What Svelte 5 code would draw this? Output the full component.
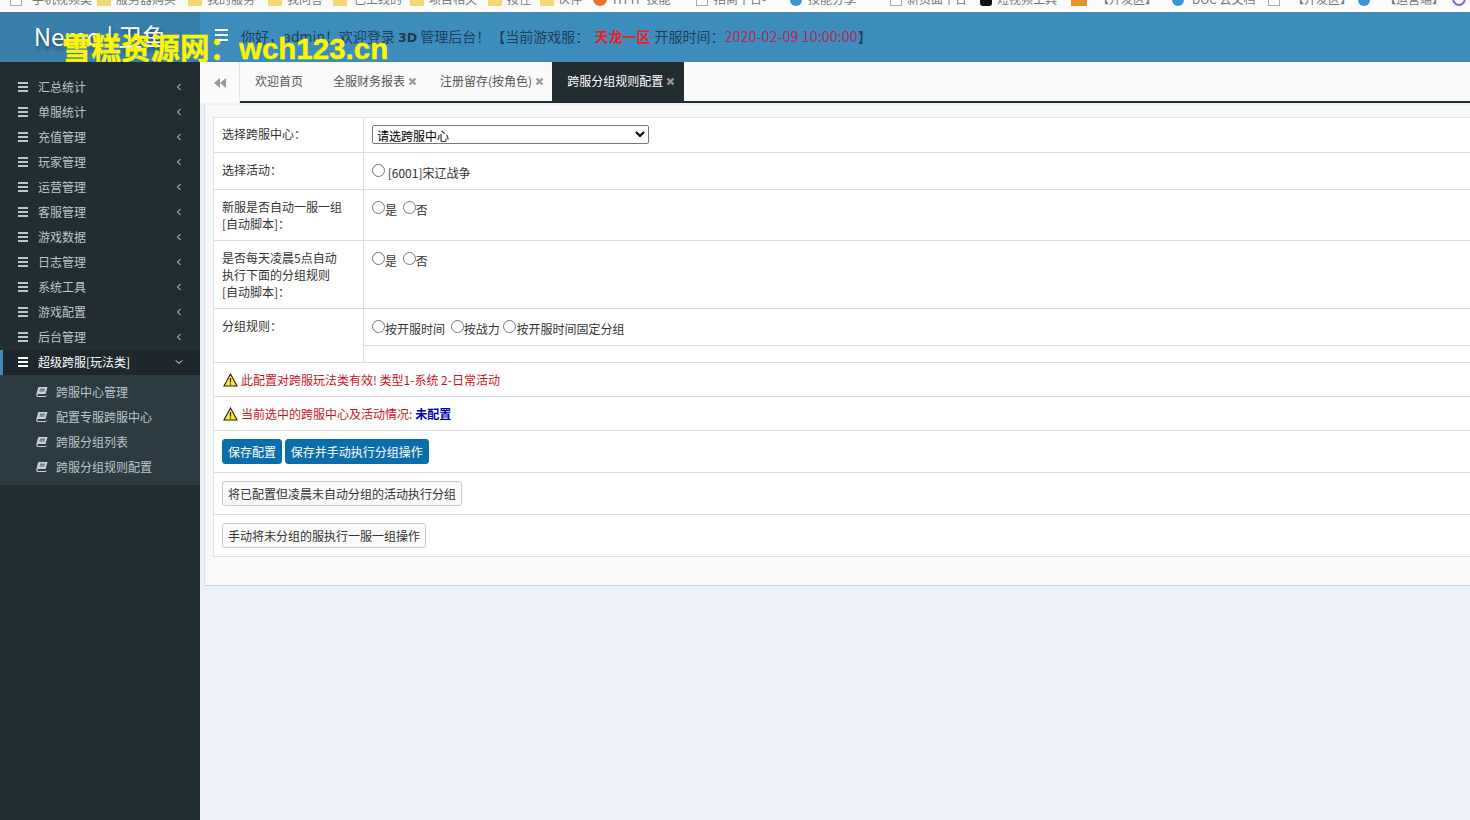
<script lang="ts">
	const menus = [
		'汇总统计',
		'单服统计',
		'充值管理',
		'玩家管理',
		'运营管理',
		'客服管理',
		'游戏数据',
		'日志管理',
		'系统工具',
		'游戏配置',
		'后台管理'
	];
	const subMenus = ['跨服中心管理', '配置专服跨服中心', '跨服分组列表', '跨服分组规则配置'];
	const tabs = [
		{ name: '欢迎首页', close: false, active: false },
		{ name: '全服财务报表', close: true, active: false },
		{ name: '注册留存(按角色)', close: true, active: false },
		{ name: '跨服分组规则配置', close: true, active: true }
	];
	const bookmarks = [
		{ x: 10, gap: 10, text: '手机视频类', kind: 'page' },
		{ x: 97, gap: 5, text: '服务器购买', kind: 'folder' },
		{ x: 188, gap: 5, text: '我的服务', kind: 'folder' },
		{ x: 268, gap: 5, text: '我问答', kind: 'folder' },
		{ x: 333, gap: 7, text: '已上线的', kind: 'folder' },
		{ x: 410, gap: 5, text: '项目相关', kind: 'folder' },
		{ x: 488, gap: 5, text: '按住', kind: 'folder' },
		{ x: 540, gap: 4, text: '伙伴', kind: 'folder' },
		{ x: 593, gap: 6, text: 'HTTP 技能', kind: 'hex' },
		{ x: 696, gap: 6, text: '招商平台-', kind: 'page' },
		{ x: 790, gap: 6, text: '技能分享', kind: 'shield' },
		{ x: 890, gap: 5, text: '新页面平台', kind: 'page' },
		{ x: 980, gap: 5, text: '短视频工具', kind: 'black' },
		{ x: 1071, gap: 10, text: '【开发区】', kind: 'orange' },
		{ x: 1172, gap: 8, text: 'DOC 云文档', kind: 'shield' },
		{ x: 1268, gap: 12, text: '【开发区】', kind: 'page' },
		{ x: 1358, gap: 14, text: '【运营端】', kind: 'shield' },
		{ x: 1452, gap: 4, text: '', kind: 'purple' }
	];
</script>

<div class="page">
	<div class="favbar">
		{#each bookmarks as b}
			<span class="fav" style="left: {b.x}px; gap: {b.gap}px">
				<i class="fav__icon fav__icon--{b.kind}"></i>{b.text}
			</span>
		{/each}
	</div>

	<header class="topbar">
		<div class="logo">Nemo | 卫鱼</div>
		<div class="topbar__main">
			<span class="burger burger--head"><i></i><i></i><i></i></span>
			<span class="hello">你好，admin！欢迎登录 <b>3D</b> 管理后台！</span>
			<span class="server">【当前游戏服： <b class="server__name">天龙一区</b> <span class="server__open">开服时间：</span><em>2020-02-09 10:00:00</em>】</span>
		</div>
		<div class="watermark">雪糕资源网：wch123.cn</div>
	</header>

	<div class="body">
		<aside class="sidebar">
			<ul class="menu">
				{#each menus as m}
					<li class="menu__item">
						<span class="burger"><i></i><i></i><i></i></span>
						<span class="menu__label">{m}</span>
						<svg class="chev" width="6" height="8" viewBox="0 0 6 8"><path d="M4.5 1 1.5 4l3 3" fill="none" stroke="#dfe6ea" /></svg>
					</li>
				{/each}
				<li class="menu__item menu__item--open">
					<span class="burger"><i></i><i></i><i></i></span>
					<span class="menu__label">超级跨服[玩法类]</span>
					<svg class="chev" width="8" height="6" viewBox="0 0 8 6"><path d="M1 1.5 4 4.5l3-3" fill="none" stroke="#fff" /></svg>
				</li>
			</ul>
			<ul class="submenu">
				{#each subMenus as s}
					<li class="submenu__item">
						<svg class="book" width="12" height="11" viewBox="0 0 12 11">
							<path d="M3 1h8.5L9.5 8h-7Q1.5 8 1.3 9t1.2 1H10l.6-1.2.2.4-.4 1Q10 11 9 11H2Q0 11 .2 9L2 2Q2.3 1 3 1Z" fill="#c6d3d9" />
							<path d="M4 3.2h5M3.5 5h5" stroke="#2c3b41" stroke-width=".8" />
						</svg>
						<span>{s}</span>
					</li>
				{/each}
			</ul>
		</aside>

		<main class="main">
			<nav class="tabs">
				<span class="tabs__back">
					<svg width="12" height="10" viewBox="0 0 12 10"><path d="M6 0v10L0 5ZM12 0v10L6 5Z" fill="#999" /></svg>
				</span>
				{#each tabs as t}
					<span class="tab" class:tab--active={t.active} class:tab--plain={!t.close}>
						{t.name}
						{#if t.close}
							<svg class="tab__x" width="9" height="9" viewBox="0 0 9 9"><path d="M1.5 1.5l6 6M7.5 1.5l-6 6" stroke="#999" stroke-width="2.4" /></svg>
						{/if}
					</span>
				{/each}
			</nav>

			<section class="panel">
				<table class="form">
					<tbody>
						<tr class="r1">
							<th>选择跨服中心：</th>
							<td>
								<select class="picker"><option>请选跨服中心</option></select>
							</td>
						</tr>
						<tr class="r2">
							<th>选择活动：</th>
							<td class="radios"><input type="radio" name="act" /> [6001]宋辽战争</td>
						</tr>
						<tr class="r3">
							<th>新服是否自动一服一组<br />[自动脚本]：</th>
							<td class="radios"><input type="radio" name="a" />是 <input type="radio" name="a" />否</td>
						</tr>
						<tr class="r4">
							<th>是否每天凌晨5点自动<br />执行下面的分组规则<br />[自动脚本]：</th>
							<td class="radios"><input type="radio" name="b" />是 <input type="radio" name="b" />否</td>
						</tr>
						<tr class="r5">
							<th>分组规则：</th>
							<td class="nested">
								<div class="nested__row radios">
									<input type="radio" name="c" />按开服时间 <input type="radio" name="c" />按战力 <input type="radio" name="c" />按开服时间固定分组
								</div>
							</td>
						</tr>
						<tr class="wide r6">
							<td colspan="2">
								<div class="notice">
									<svg class="warn" width="15" height="14" viewBox="0 0 15 14"><path d="M7.5 1 14 13H1Z" fill="#fdee21" stroke="#222" stroke-width="1.1" /><path d="M7.5 5v4.5M7.5 10.5v1.2" stroke="#222" stroke-width="1.2" /></svg>
									此配置对跨服玩法类有效! 类型1-系统 2-日常活动
								</div>
							</td>
						</tr>
						<tr class="wide r7">
							<td colspan="2">
								<div class="notice">
									<svg class="warn" width="15" height="14" viewBox="0 0 15 14"><path d="M7.5 1 14 13H1Z" fill="#fdee21" stroke="#222" stroke-width="1.1" /><path d="M7.5 5v4.5M7.5 10.5v1.2" stroke="#222" stroke-width="1.2" /></svg>
									当前选中的跨服中心及活动情况: <b>未配置</b>
								</div>
							</td>
						</tr>
						<tr class="wide r8">
							<td colspan="2">
								<button class="btn btn--primary">保存配置</button>
								<button class="btn btn--primary">保存并手动执行分组操作</button>
							</td>
						</tr>
						<tr class="wide r9">
							<td colspan="2"><button class="btn">将已配置但凌晨未自动分组的活动执行分组</button></td>
						</tr>
						<tr class="wide r9">
							<td colspan="2"><button class="btn">手动将未分组的服执行一服一组操作</button></td>
						</tr>
					</tbody>
				</table>
			</section>
		</main>
	</div>
</div>

<style>
	:global(body) {
		margin: 0;
		background: #edf2f9;
		overflow: hidden;
	}

	ul {
		margin: 0;
		padding: 0;
		list-style: none;
	}

	.page {
		position: relative;
		width: 1470px;
		height: 820px;
		overflow: hidden;
		font-family: 'Noto Sans CJK SC', 'Liberation Sans', sans-serif;
		font-size: 12px;
		color: #333;
	}

	/* cut off browser bookmarks along the top */
	.favbar {
		position: relative;
		height: 12px;
		overflow: hidden;
		background: #fcfcfc;
	}

	.fav {
		position: absolute;
		top: -10px;
		display: flex;
		align-items: center;
		height: 16px;
		font-size: 12px;
		white-space: nowrap;
		color: #777;
	}

	.fav__icon {
		flex: none;
		display: block;
		width: 12px;
		height: 16px;
	}

	.fav__icon--page {
		border: 1px solid #aaa;
		box-sizing: border-box;
		background: #fff;
	}

	.fav__icon--folder {
		background: #f6d675;
		width: 14px;
	}

	.fav__icon--hex {
		background: #e8742c;
		width: 14px;
		border-radius: 0 0 7px 7px;
	}

	.fav__icon--orange {
		background: #e8922c;
		width: 16px;
	}

	.fav__icon--shield {
		background: #3a94d6;
		border-radius: 0 0 7px 7px;
	}

	.fav__icon--black {
		background: #111;
		border-radius: 0 0 3px 3px;
	}

	.fav__icon--purple {
		box-sizing: border-box;
		width: 14px;
		border: 2px solid #7a6cc4;
		border-radius: 50%;
		background: #fff;
	}

	.topbar {
		position: relative;
		display: flex;
		height: 50px;
		overflow: hidden;
		background: #3c8dbc;
	}

	.logo {
		width: 200px;
		flex: none;
		padding-top: 6px;
		box-sizing: border-box;
		background: linear-gradient(100deg, #3a80ab, #367fa9);
		color: #fff;
		font-size: 24px;
		line-height: 36px;
		text-align: center;
		text-shadow: 1px 3px 4px rgb(0 0 0 / 45%);
	}

	.topbar__main {
		display: flex;
		align-items: center;
		height: 48px;
		padding-left: 15px;
		font-size: 14px;
		color: #1f3f5c;
	}

	.hello b {
		font-family: 'DejaVu Sans', sans-serif;
		font-size: 12.5px;
		color: #22384f;
	}

	.hello {
		margin-left: 13px;
	}

	.server {
		margin-left: 1px;
	}

	.server__name {
		margin-left: 2px;
		color: #ec1c24;
	}

	.server__open {
		margin-left: 1px;
	}

	.server em {
		font-style: normal;
		letter-spacing: 0.2px;
		color: #b4285a;
	}

	/* pasted-in site stamp that covers the logo */
	.watermark {
		position: absolute;
		left: 62px;
		top: 17px;
		color: #fdf600;
		font-family: 'Liberation Sans', 'Noto Sans CJK SC', sans-serif;
		font-size: 29.5px;
		font-weight: 700;
		line-height: 40px;
		white-space: nowrap;
		-webkit-text-stroke: 0.4px #fdf600;
	}

	.body {
		display: flex;
		height: 758px;
	}

	.sidebar {
		width: 200px;
		flex: none;
		padding-top: 13px;
		box-sizing: border-box;
		background: #222d32;
	}

	.burger {
		display: flex;
		flex-direction: column;
		gap: 2px;
		width: 10px;
		flex: none;
	}

	.burger i {
		display: block;
		height: 2px;
		background: #b8c7ce;
	}

	.burger--head {
		width: 13px;
		gap: 3px;
		margin-top: -2px;
	}

	.burger--head i {
		background: #fff;
	}

	.menu__item {
		display: flex;
		align-items: center;
		height: 25px;
		padding: 0 0 2px 18px;
		box-sizing: border-box;
		color: #b8c7ce;
	}

	.menu__label {
		flex: 1;
		margin-left: 10px;
	}

	.chev {
		margin-right: 18px;
	}

	.menu__item--open {
		background: #1e282c;
		color: #fff;
		box-shadow: inset 3px 0 0 #3c8dbc;
	}

	.menu__item--open .burger i {
		background: #fff;
	}

	.menu__item--open .chev {
		margin-right: 17px;
	}

	.submenu {
		height: 110px;
		padding-top: 5px;
		box-sizing: border-box;
		background: #2c3b41;
	}

	.submenu__item {
		display: flex;
		align-items: center;
		height: 25px;
		padding: 0 0 2px 36px;
		box-sizing: border-box;
		color: #b8c7ce;
	}

	.book {
		margin-right: 8px;
	}

	.main {
		flex: 1;
		min-width: 0;
	}

	.tabs {
		display: flex;
		height: 39px;
		border-bottom: 2px solid #222d32;
		background: #fafafa;
	}

	.tabs__back {
		display: flex;
		align-items: center;
		justify-content: center;
		width: 39px;
		height: 41px;
		margin-bottom: -2px;
		flex: none;
		border-right: 1px solid #e4e4e4;
		background: #fafafa;
	}

	.tab {
		display: flex;
		align-items: center;
		gap: 3px;
		padding: 0 8px 2px 15px;
		color: #555;
		white-space: nowrap;
	}

	.tab--plain {
		padding-right: 15px;
	}

	.tab--active {
		padding-right: 9px;
		background: #222d32;
		color: #fff;
	}

	.tab__x {
		margin-top: 2px;
	}

	.panel {
		height: 481px;
		margin: 2px 0 0 4px;
		padding: 12px 0 0 8px;
		box-sizing: border-box;
		border-bottom: 1px solid #bcd6ea;
		border-left: 1px solid #d4e0ec;
		background: #f9f9f9;
	}

	.form {
		width: 1300px;
		border-collapse: collapse;
		background: #fff;
		border-top: 1px solid #e4e4e4;
		border-left: 1px solid #e4e4e4;
		font-size: 12px;
		line-height: 17px;
		color: #333;
	}

	.form tr {
		border-bottom: 1px solid #ddd;
	}

	.form th {
		width: 150px;
		padding: 8px 8px 0;
		box-sizing: border-box;
		border-right: 1px solid #ddd;
		font-weight: 400;
		text-align: left;
		vertical-align: top;
	}

	.form .r1 th {
		padding-top: 7px;
	}

	.form td {
		padding: 0 8px;
		vertical-align: top;
	}

	.r1 {
		height: 35px;
	}

	.r2 {
		height: 37px;
	}

	.r3 {
		height: 51px;
	}

	.r4 {
		height: 68px;
	}

	.r5 {
		height: 54px;
	}

	.r6,
	.r7 {
		height: 34px;
	}

	.r8,
	.r9 {
		height: 42px;
	}

	.picker {
		display: block;
		width: 277px;
		height: 19px;
		margin-top: 7px;
		padding: 0;
		border: 1px solid #767676;
		border-radius: 2px;
		background: #fff;
		font-family: inherit;
		font-size: 12px;
		line-height: normal;
		color: #000;
	}

	.form .radios {
		padding-top: 11px;
		font-size: 12px;
		line-height: 17px;
	}

	.radios input {
		width: 13px;
		height: 13px;
		margin: 0;
		vertical-align: 1px;
	}

	.radios input ~ input {
		margin-left: 3px;
	}

	.radios input:nth-of-type(3) {
		margin-left: 1px;
	}

	.form .nested {
		padding: 0;
	}

	.nested__row {
		height: 37px;
		padding: 9px 8px 0;
		box-sizing: border-box;
		border-bottom: 1px solid #ddd;
	}

	.form .wide td {
		padding: 0 8px;
		vertical-align: middle;
	}

	.notice {
		display: flex;
		align-items: center;
		gap: 3px;
		color: #c9161d;
		font-size: 12px;
	}

	.notice b {
		color: #0000b0;
	}

	.warn {
		margin-left: 1px;
	}

	.btn {
		height: 25px;
		padding: 0 5px;
		border: 1px solid #ccc;
		border-radius: 3px;
		background: #fafafa;
		font: inherit;
		font-size: 12px;
		color: #333;
		vertical-align: middle;
	}

	.btn--primary {
		border-color: #0a6ead;
		background: #0a6ead;
		color: #fff;
	}
</style>
